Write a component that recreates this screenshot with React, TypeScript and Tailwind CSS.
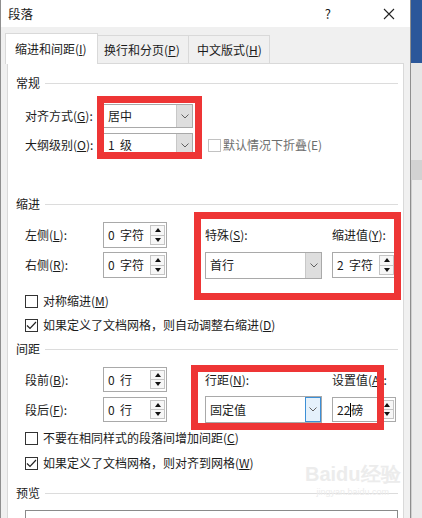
import React from "react";

const Chevron = () => (
    <svg width="8" height="5" viewBox="0 0 8 5">
        <path d="M0.5 0.5 L4 4 L7.5 0.5" fill="none" stroke="#606060" strokeWidth="1" />
    </svg>
);

const Tri = ({ up }: { up?: boolean }) => (
    <svg width="6" height="4" viewBox="0 0 6 4">
        <polygon points={up ? "0,4 6,4 3,0" : "0,0 6,0 3,4"} fill="#111" />
    </svg>
);

const Select = ({ value, w, active }: { value: string; w: string; active?: boolean }) => (
    <div className={`${w} h-full flex border border-[#a9a9a9] bg-white`}>
        <div className="flex-1 flex items-center pl-[4px] whitespace-pre">{value}</div>
        {active ? (
            <div className="w-[16px] h-full flex items-center justify-center bg-[#e5f1fb] border border-[#3c8fd6]">
                <Chevron />
            </div>
        ) : (
            <div className="w-[16px] h-full flex items-center justify-center bg-[#dedede] border-l border-[#c8c8c8]">
                <Chevron />
            </div>
        )}
    </div>
);

const Spin = ({ value, w, cursor }: { value: string; w: string; cursor?: boolean }) => (
    <div className={`${w} h-full flex border border-[#a9a9a9] bg-white`}>
        <div className="flex-1 flex items-center pl-[4px] whitespace-pre">
            {cursor ? (
                <>
                    22<span className="inline-block w-px h-[14px] bg-black" />磅
                </>
            ) : (
                value
            )}
        </div>
        <div className="w-[15px] my-[2px] mr-[1px] flex flex-col border border-[#c4c4c4] bg-[#f7f7f7]">
            <div className="flex-1 flex items-center justify-center border-b border-[#c4c4c4]">
                <Tri up />
            </div>
            <div className="flex-1 flex items-center justify-center">
                <Tri />
            </div>
        </div>
    </div>
);

const Check = ({ checked, disabled }: { checked?: boolean; disabled?: boolean }) => (
    <div
        className={`w-[13px] h-[13px] border bg-white flex items-center justify-center ${
            disabled ? "border-[#c2c2c2]" : "border-[#333]"
        }`}
    >
        {checked && (
            <svg width="11" height="9" viewBox="0 0 11 9">
                <path d="M1 4.5 L4 7.5 L10 1" fill="none" stroke="#222" strokeWidth="1.2" />
            </svg>
        )}
    </div>
);

const Header = ({ text, mt }: { text: string; mt: string }) => (
    <div className={`${mt} h-4 flex items-center pl-[8px] pr-[5px] gap-[5px]`}>
        <span>{text}</span>
        <div className="flex-1 h-px bg-[#dcdcdc]" />
    </div>
);

const CheckRow = ({ mt, checked, children }: { mt: string; checked?: boolean; children: React.ReactNode }) => (
    <div className={`${mt} h-4 flex items-center pl-[17px] gap-[5px]`}>
        <Check checked={checked} />
        <span>{children}</span>
    </div>
);

export default function App() {
    return (
        <div className="relative w-[422px] h-[518px] overflow-hidden flex bg-white text-[12px] leading-4 text-[#1b1b1b] font-['Noto_Sans_CJK_SC','Noto_Sans',sans-serif]">
            <div className="w-[411px] h-full flex flex-col bg-[#f0f0f0] border-l border-r border-[#8f8f8f]">
                <div className="h-[27px] shrink-0 bg-white flex items-center pl-[7px] text-[12.5px]">
                    <span>段落</span>
                    <span className="ml-auto mr-[52px] text-[13px]">?</span>
                    <svg width="12" height="12" viewBox="0 0 12 12" className="mr-[15px]">
                        <path d="M1 1 L11 11 M11 1 L1 11" stroke="#222" strokeWidth="1.1" />
                    </svg>
                </div>

                <div className="h-[36px] shrink-0 flex items-end pl-[4px]">
                    <div className="relative z-10 -mb-px w-[93px] h-[31px] bg-white border border-b-0 border-[#d9d9d9] flex items-center pl-[9px]">
                        缩进和间距(<u>I</u>)
                    </div>
                    <div className="w-[91px] h-[28px] border-t border-r border-[#d9d9d9] flex items-center pl-[6px]">
                        换行和分页(<u>P</u>)
                    </div>
                    <div className="w-[81px] h-[28px] border-t border-r border-[#d9d9d9] flex items-center pl-[8px]">
                        中文版式(<u>H</u>)
                    </div>
                </div>

                <div className="flex-1 mx-[6px] bg-white border border-[#d9d9d9] flex flex-col">
                    <Header text="常规" mt="mt-[11px]" />
                    <div className="mt-[13px] h-[24px] flex items-center pl-[17px]">
                        <span className="w-[78px]">
                            对齐方式(<u>G</u>):
                        </span>
                        <Select value="居中" w="w-[90px]" />
                    </div>
                    <div className="mt-[5px] h-[24px] flex items-center pl-[17px]">
                        <span className="w-[78px]">
                            大纲级别(<u>O</u>):
                        </span>
                        <Select value="1  级" w="w-[90px]" />
                        <div className="ml-[15px] flex items-center gap-[2px] text-[#6d6d6d]">
                            <Check disabled />
                            <span>默认情况下折叠(E)</span>
                        </div>
                    </div>

                    <Header text="缩进" mt="mt-[39px]" />
                    <div className="mt-[10px] h-[26px] flex items-center pl-[17px]">
                        <span className="w-[78px]">
                            左侧(<u>L</u>):
                        </span>
                        <Spin value="0  字符" w="w-[64px]" />
                        <span className="ml-[38px] w-[127px]">
                            特殊(<u>S</u>):
                        </span>
                        <span>
                            缩进值(<u>Y</u>):
                        </span>
                    </div>
                    <div className="mt-[4px] h-[26px] flex items-center pl-[17px]">
                        <span className="w-[78px]">
                            右侧(<u>R</u>):
                        </span>
                        <Spin value="0  字符" w="w-[64px]" />
                        <div className="ml-[38px] h-[27px] flex">
                            <Select value="首行" w="w-[117px]" />
                        </div>
                        <div className="ml-[10px] h-full flex">
                            <Spin value="2  字符" w="w-[64px]" />
                        </div>
                    </div>
                    <CheckRow mt="mt-[15px]">
                        对称缩进(<u>M</u>)
                    </CheckRow>
                    <CheckRow mt="mt-[8px]" checked>
                        如果定义了文档网格，则自动调整右缩进(<u>D</u>)
                    </CheckRow>

                    <Header text="间距" mt="mt-[8px]" />
                    <div className="mt-[10px] h-[25px] flex items-center pl-[17px]">
                        <span className="w-[78px]">
                            段前(<u>B</u>):
                        </span>
                        <Spin value="0  行" w="w-[64px]" />
                        <span className="ml-[38px] w-[127px]">
                            行距(<u>N</u>):
                        </span>
                        <span>
                            设置值(<u>A</u>):
                        </span>
                    </div>
                    <div className="mt-[5px] h-[25px] flex items-center pl-[17px]">
                        <span className="w-[78px]">
                            段后(<u>F</u>):
                        </span>
                        <Spin value="0  行" w="w-[64px]" />
                        <div className="ml-[38px] h-[27px] flex">
                            <Select value="固定值" w="w-[117px]" active />
                        </div>
                        <div className="ml-[10px] h-full flex">
                            <Spin value="22磅" w="w-[64px]" cursor />
                        </div>
                    </div>
                    <CheckRow mt="mt-[8px]">
                        不要在相同样式的段落间增加间距(<u>C</u>)
                    </CheckRow>
                    <CheckRow mt="mt-[9px]" checked>
                        如果定义了文档网格，则对齐到网格(<u>W</u>)
                    </CheckRow>

                    <Header text="预览" mt="mt-[14px]" />
                    <div className="mt-[9px] mx-[17px] mr-[5px] h-[40px] border border-[#8a8a8a] bg-white" />
                </div>
            </div>

            <div className="flex-1 flex flex-col">
                <div className="h-[63px] bg-[#2b579a]" />
                <div className="h-[97px] bg-[#e6e6e6]" />
                <div className="h-[20px] bg-[#d2d2d2]" />
                <div className="flex-1 bg-[#ececec] border-l border-[#d0d0d0]" />
            </div>

            {/* annotation boxes */}
            <div className="absolute left-[97px] top-[96px] w-[105px] h-[63px] border-[7px] border-[#ee3535]" />
            <div className="absolute left-[194px] top-[212px] w-[207px] h-[88px] border-[7px] border-[#ee3535]" />
            <div className="absolute left-[191px] top-[365px] w-[193px] h-[65px] border-[7px] border-[#ee3535]" />

            {/* watermark */}
            <div className="absolute left-[305px] top-[462px] flex flex-col items-center text-[#ececec]">
                <span className="text-[20px] leading-6 font-bold font-['Liberation_Sans',sans-serif]">Baidu经验</span>
                <span className="text-[9px] leading-3 font-['Liberation_Sans',sans-serif]">jingyan.baidu.com</span>
            </div>
        </div>
    );
}
